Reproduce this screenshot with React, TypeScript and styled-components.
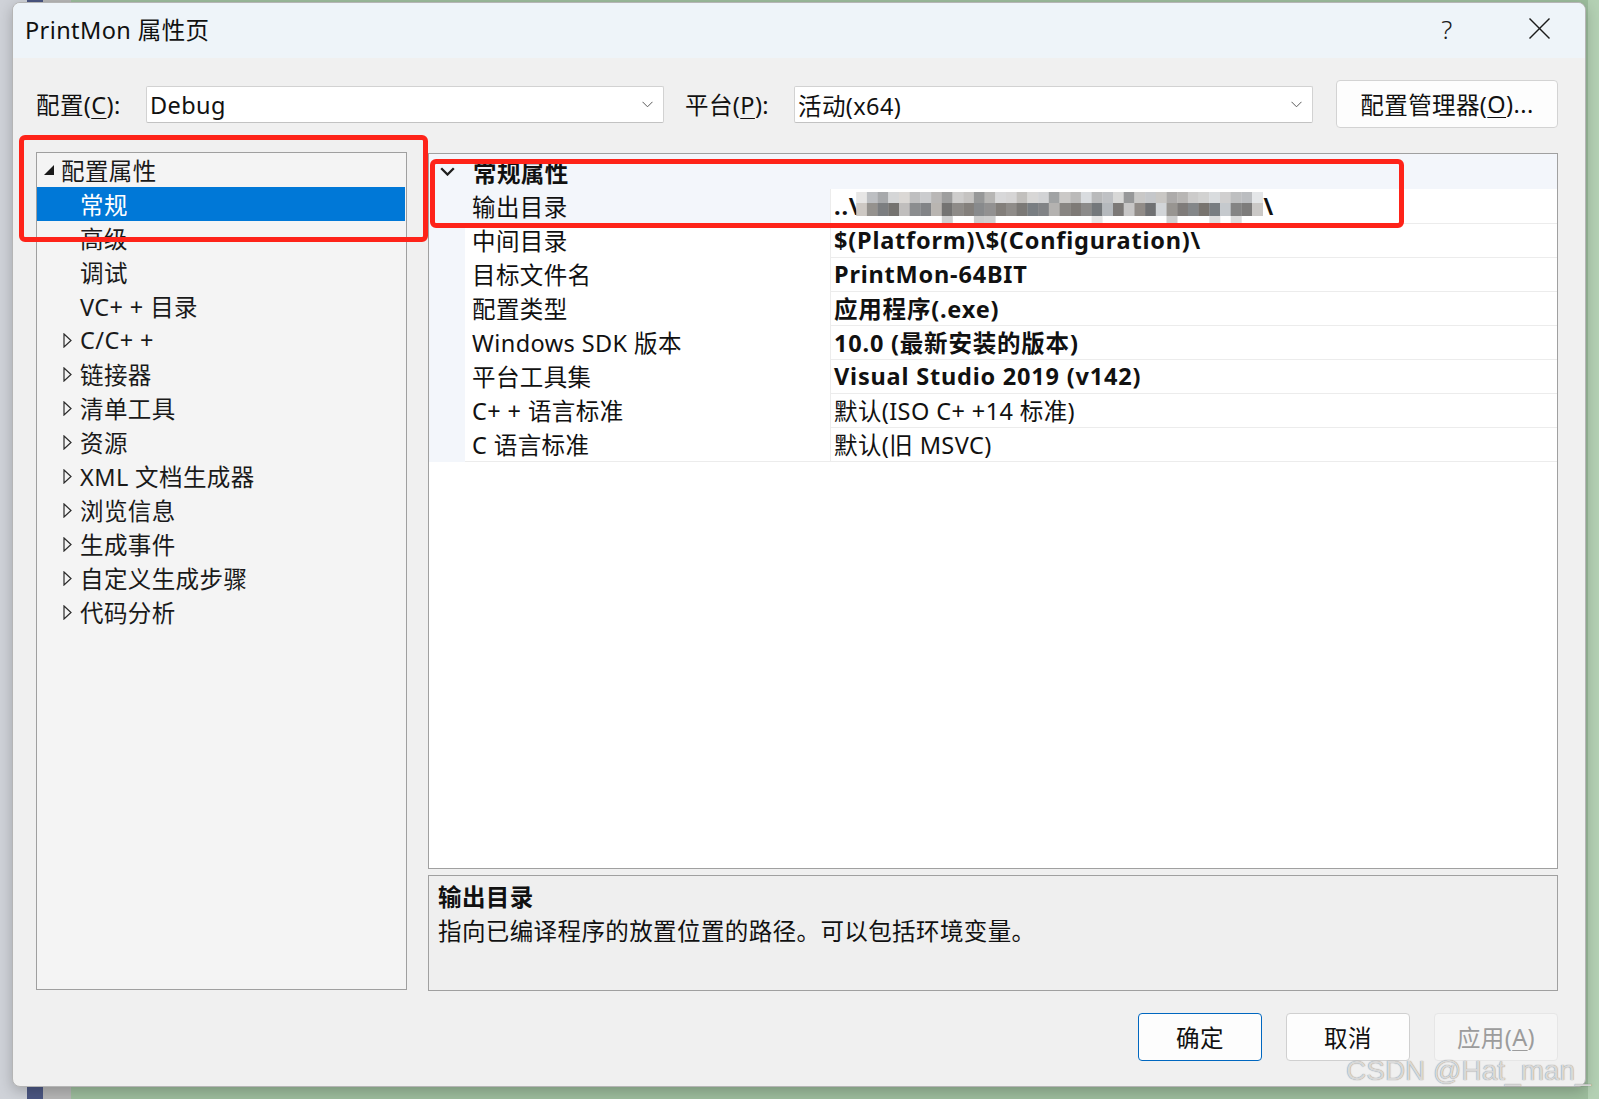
import React from 'react';
import styled, { createGlobalStyle } from 'styled-components';

const GlobalStyle = createGlobalStyle`
  html, body { margin: 0; padding: 0; }
  body {
    width: 1599px;
    height: 1099px;
    overflow: hidden;
    font-family: "Noto Sans", "Noto Sans CJK SC", sans-serif;
    letter-spacing: 0.4px;
    color: #000;
  }
  * { box-sizing: border-box; }
`;

/* ---------- desktop behind the dialog ---------- */
const Backdrop = styled.div`
  position: relative;
  width: 1599px;
  height: 1099px;
  padding: 2px 13px 12px 12px;
  background: linear-gradient(
    to right,
    #cfd2d8 0 27px,
    #4b5682 27px 43px,
    #b7b7b7 43px 71px,
    #9dbd9d 71px 1588px,
    #b3d0b3 1588px
  );
`;

const Dialog = styled.div`
  width: 1574px;
  height: 1085px;
  display: flex;
  flex-direction: column;
  background: #f0f0f0;
  border: 1px solid #b5b5b5;
  border-radius: 8px;
  box-shadow: 0 4px 14px rgba(0, 0, 0, 0.22);
  overflow: hidden;
`;

/* ---------- title bar ---------- */
const TitleBar = styled.div`
  flex: none;
  height: 55px;
  display: flex;
  align-items: center;
  padding-left: 12px;
  background: #eef4f9;
`;

const TitleText = styled.div`
  flex: 1;
  margin-top: -4px;
  font-size: 23.5px;
  color: #111;
`;

const CaptionButton = styled.div`
  width: 92px;
  height: 55px;
  display: flex;
  align-items: center;
  justify-content: center;
  padding-bottom: 4px;
  font-size: 26px;
  font-weight: 300;
  color: #1b1b1b;
`;

/* ---------- body ---------- */
const Body = styled.div`
  flex: 1;
  display: flex;
  flex-direction: column;
  padding: 0 27px 0 23px;
`;

const TopRow = styled.div`
  display: flex;
  align-items: center;
  height: 48px;
  margin-top: 22px;
`;

const FieldLabel = styled.div<{ $w: number; $ml?: number }>`
  width: ${(p) => p.$w}px;
  margin-left: ${(p) => p.$ml ?? 0}px;
  font-size: 23.5px;
  color: #111;
  white-space: nowrap;
  u { text-underline-offset: 4px; text-decoration-thickness: 1px; }
`;

const Combo = styled.div<{ $w: number }>`
  width: ${(p) => p.$w}px;
  height: 37px;
  display: flex;
  align-items: center;
  justify-content: space-between;
  padding: 1px 10px 0 3px;
  background: #fff;
  border: 1px solid #d2d2d2;
  border-bottom-color: #c2c2c2;
  border-radius: 2px;
  font-size: 23.5px;
  color: #111;
`;

const ManagerButton = styled.div`
  width: 222px;
  height: 48px;
  margin-left: 23px;
  display: flex;
  align-items: center;
  justify-content: center;
  background: #fdfdfd;
  border: 1px solid #d3d3d3;
  border-radius: 4px;
  font-size: 23.5px;
  color: #111;
  u { text-underline-offset: 4px; text-decoration-thickness: 1px; }
`;

const Main = styled.div`
  margin-top: 24px;
  height: 839px;
  display: grid;
  grid-template-columns: 371px 1fr;
  column-gap: 21px;
`;

/* ---------- tree ---------- */
const TreePanel = styled.div`
  height: 838px;
  background: #f4f4f4;
  border: 1px solid #9f9f9f;
  padding-right: 1px;
  overflow: hidden;
`;

const TreeRow = styled.div<{ $level: number; $selected?: boolean }>`
  height: 34px;
  display: flex;
  align-items: center;
  padding-left: ${(p) => 4 + p.$level * 19}px;
  background: ${(p) => (p.$selected ? '#0078d7' : 'transparent')};
  color: ${(p) => (p.$selected ? '#fff' : '#1a1a1a')};
  font-size: 23.5px;
  white-space: nowrap;
`;

const Expander = styled.span`
  flex: none;
  width: 19px;
  margin-right: 1px;
  padding-left: 3px;
  display: flex;
  align-items: center;
`;

/* ---------- property grid ---------- */
const RightColumn = styled.div`
  display: flex;
  flex-direction: column;
  gap: 6px;
`;

const PropGrid = styled.div`
  flex: 1;
  margin-top: 1px;
  display: flex;
  flex-direction: column;
  background: #fff;
  border: 1px solid #a0a0a0;
`;

const GroupHeader = styled.div`
  height: 35px;
  display: grid;
  grid-template-columns: 36px 1fr;
  align-items: center;
  background: #f3f6fb;
  font-size: 23.5px;
  font-weight: 700;
  color: #111;
`;

const GutterIcon = styled.div`
  display: flex;
  justify-content: center;
  align-items: center;
`;

const HeaderLabel = styled.div`
  padding-left: 8px;
`;

const PropRow = styled.div`
  height: 34px;
  display: grid;
  grid-template-columns: 36px 366px 1fr;
  font-size: 23.5px;
  color: #111;
`;

const Gutter = styled.div`
  background: #f3f6fb;
`;

const NameCell = styled.div<{ $selected?: boolean }>`
  display: flex;
  align-items: center;
  padding-left: 7px;
  background: ${(p) => (p.$selected ? '#f3f6fb' : '#fff')};
  border-bottom: 1px solid #ececec;
  border-right: 1px solid #ececec;
  white-space: nowrap;
`;

const ValueCell = styled.div<{ $bold?: boolean }>`
  display: flex;
  align-items: center;
  padding-left: 3px;
  font-weight: ${(p) => (p.$bold ? 700 : 400)};
  letter-spacing: ${(p) => (p.$bold ? '0.8px' : '0.4px')};
  border-bottom: 1px solid #ececec;
  white-space: nowrap;
  overflow: hidden;
`;

const MosaicSvg = styled.svg`
  flex: none;
  align-self: flex-start;
  margin-top: 3px;
  margin-left: -3px;
`;

/* ---------- description ---------- */
const DescPanel = styled.div`
  height: 116px;
  background: #efefef;
  border: 1px solid #a0a0a0;
  padding: 4px 9px;
  font-size: 23.5px;
  line-height: 34px;
  color: #111;
`;

const DescTitle = styled.div`
  font-weight: 700;
`;

/* ---------- footer ---------- */
const Footer = styled.div`
  margin-top: 22px;
  height: 48px;
  display: flex;
  justify-content: flex-end;
  gap: 24px;
`;

const DialogButton = styled.div<{ $variant: 'primary' | 'normal' | 'disabled' }>`
  width: 124px;
  height: 48px;
  display: flex;
  align-items: center;
  justify-content: center;
  border-radius: 4px;
  font-size: 23.5px;
  background: ${(p) => (p.$variant === 'disabled' ? '#f5f5f5' : '#fdfdfd')};
  border: 1px solid
    ${(p) =>
      p.$variant === 'primary' ? '#0067c0' : p.$variant === 'disabled' ? '#e6e6e6' : '#d0d0d0'};
  color: ${(p) => (p.$variant === 'disabled' ? '#9c9c9c' : '#111')};
  u { text-underline-offset: 4px; text-decoration-thickness: 1px; }
`;

/* ---------- overlays ---------- */
const Annotation = styled.div<{ $x: number; $y: number; $w: number; $h: number }>`
  position: absolute;
  left: ${(p) => p.$x}px;
  top: ${(p) => p.$y}px;
  width: ${(p) => p.$w}px;
  height: ${(p) => p.$h}px;
  border: 5px solid #fe2319;
  border-radius: 6px;
  pointer-events: none;
`;

const Watermark = styled.div`
  position: absolute;
  left: 1346px;
  top: 1057px;
  font-family: "Liberation Sans", Arial, sans-serif;
  font-size: 28px;
  line-height: 28px;
  letter-spacing: 0;
  color: rgba(236, 236, 236, 0.85);
  text-shadow: 0 0 1px rgba(70, 70, 70, 0.8);
  white-space: nowrap;
  pointer-events: none;
`;

/* ---------- drawings ---------- */
const ComboChevron = () => (
  <svg width="11" height="7" viewBox="0 0 11 7">
    <polyline points="0.5,0.8 5.5,5.8 10.5,0.8" fill="none" stroke="#5a5a5a" strokeWidth="1" />
  </svg>
);

const OpenTriangle = () => (
  <svg width="10" height="10" viewBox="0 0 10 10">
    <polygon points="10,0 10,10 0,10" fill="#1a1a1a" />
  </svg>
);

const ClosedTriangle = () => (
  <svg width="9" height="15" viewBox="0 0 9 15">
    <polygon points="1,1 8,7.5 1,14" fill="none" stroke="#2a2a2a" strokeWidth="1.2" />
  </svg>
);

const HeaderChevron = () => (
  <svg width="15" height="9" viewBox="0 0 15 9">
    <polyline points="1.2,1.2 7.5,7.5 13.8,1.2" fill="none" stroke="#1e1e1e" strokeWidth="2.3" />
  </svg>
);

const CloseGlyph = () => (
  <svg width="21" height="21" viewBox="0 0 21 21">
    <line x1="0.5" y1="0.5" x2="20.5" y2="20.5" stroke="#1b1b1b" strokeWidth="1.4" />
    <line x1="20.5" y1="0.5" x2="0.5" y2="20.5" stroke="#1b1b1b" strokeWidth="1.4" />
  </svg>
);

/* pixelated (blurred) path */
let seed = 11;
const rnd = () => {
  seed = (seed * 9301 + 49297) % 233280;
  return seed / 233280;
};
const COLS = 38;
const BW = 10.7;
const gray = (v: number, tint = 0) =>
  `rgb(${Math.round(v + tint)},${Math.round(v)},${Math.round(v - tint)})`;
const mosaicRows = [
  {
    y: 0,
    h: 11,
    cells: Array.from({ length: COLS }, (_, i) => {
      const edge = i === 0 || i === COLS - 1;
      const v = edge ? 230 : rnd() < 0.25 ? 150 + rnd() * 25 : 178 + rnd() * 45;
      return gray(v, rnd() * 6 - 3);
    }),
  },
  {
    y: 11,
    h: 13,
    cells: Array.from({ length: COLS }, (_, i) => {
      const edge = i === 0 || i === COLS - 1;
      const v = edge ? 200 : rnd() < 0.12 ? 175 + rnd() * 40 : 112 + rnd() * 40;
      return gray(v, rnd() * 10 - 5);
    }),
  },
  {
    y: 24,
    h: 7,
    cells: Array.from({ length: COLS }, () =>
      rnd() < 0.22 ? gray(200 + rnd() * 30) : 'none'
    ),
  },
];

const Mosaic = () => (
  <MosaicSvg width={Math.round(COLS * BW)} height={31} viewBox={`0 0 ${COLS * BW} 31`}>
    {mosaicRows.map((row, r) =>
      row.cells.map((c, i) =>
        c === 'none' ? null : (
          <rect key={`${r}-${i}`} x={i * BW} y={row.y} width={BW + 0.3} height={row.h} fill={c} />
        )
      )
    )}
  </MosaicSvg>
);

/* ---------- data ---------- */
type TreeItem = { label: string; level: number; state?: 'open' | 'closed'; selected?: boolean };
const treeItems: TreeItem[] = [
  { label: '配置属性', level: 0, state: 'open' },
  { label: '常规', level: 1, selected: true },
  { label: '高级', level: 1 },
  { label: '调试', level: 1 },
  { label: 'VC+ + 目录', level: 1 },
  { label: 'C/C+ +', level: 1, state: 'closed' },
  { label: '链接器', level: 1, state: 'closed' },
  { label: '清单工具', level: 1, state: 'closed' },
  { label: '资源', level: 1, state: 'closed' },
  { label: 'XML 文档生成器', level: 1, state: 'closed' },
  { label: '浏览信息', level: 1, state: 'closed' },
  { label: '生成事件', level: 1, state: 'closed' },
  { label: '自定义生成步骤', level: 1, state: 'closed' },
  { label: '代码分析', level: 1, state: 'closed' },
];

type Prop = { name: string; value: string; bold: boolean };
const props: Prop[] = [
  { name: '中间目录', value: '$(Platform)\\$(Configuration)\\', bold: true },
  { name: '目标文件名', value: 'PrintMon-64BIT', bold: true },
  { name: '配置类型', value: '应用程序(.exe)', bold: true },
  { name: 'Windows SDK 版本', value: '10.0 (最新安装的版本)', bold: true },
  { name: '平台工具集', value: 'Visual Studio 2019 (v142)', bold: true },
  { name: 'C+ + 语言标准', value: '默认(ISO C+ +14 标准)', bold: false },
  { name: 'C 语言标准', value: '默认(旧 MSVC)', bold: false },
];

export default function App() {
  return (
    <>
      <GlobalStyle />
      <Backdrop>
        <Dialog>
          <TitleBar>
            <TitleText>PrintMon 属性页</TitleText>
            <CaptionButton>?</CaptionButton>
            <CaptionButton>
              <CloseGlyph />
            </CaptionButton>
          </TitleBar>

          <Body>
            <TopRow>
              <FieldLabel $w={110}>
                配置(<u>C</u>):
              </FieldLabel>
              <Combo $w={518}>
                <span>Debug</span>
                <ComboChevron />
              </Combo>
              <FieldLabel $w={109} $ml={21}>
                平台(<u>P</u>):
              </FieldLabel>
              <Combo $w={519}>
                <span>活动(x64)</span>
                <ComboChevron />
              </Combo>
              <ManagerButton>
                配置管理器(<u>O</u>)...
              </ManagerButton>
            </TopRow>

            <Main>
              <TreePanel>
                {treeItems.map((t) => (
                  <TreeRow key={t.label} $level={t.level} $selected={t.selected}>
                    <Expander>
                      {t.state === 'open' && <OpenTriangle />}
                      {t.state === 'closed' && <ClosedTriangle />}
                    </Expander>
                    {t.label}
                  </TreeRow>
                ))}
              </TreePanel>

              <RightColumn>
                <PropGrid>
                  <GroupHeader>
                    <GutterIcon>
                      <HeaderChevron />
                    </GutterIcon>
                    <HeaderLabel>常规属性</HeaderLabel>
                  </GroupHeader>
                  <PropRow>
                    <Gutter />
                    <NameCell $selected>输出目录</NameCell>
                    <ValueCell $bold>
                      <span>..\</span>
                      <Mosaic />
                      <span>\</span>
                    </ValueCell>
                  </PropRow>
                  {props.map((p) => (
                    <PropRow key={p.name}>
                      <Gutter />
                      <NameCell>{p.name}</NameCell>
                      <ValueCell $bold={p.bold}>{p.value}</ValueCell>
                    </PropRow>
                  ))}
                </PropGrid>

                <DescPanel>
                  <DescTitle>输出目录</DescTitle>
                  <div>指向已编译程序的放置位置的路径。可以包括环境变量。</div>
                </DescPanel>
              </RightColumn>
            </Main>

            <Footer>
              <DialogButton $variant="primary">确定</DialogButton>
              <DialogButton $variant="normal">取消</DialogButton>
              <DialogButton $variant="disabled">
                应用(<u>A</u>)
              </DialogButton>
            </Footer>
          </Body>
        </Dialog>

        <Annotation $x={19} $y={135} $w={409} $h={107} />
        <Annotation $x={430} $y={159} $w={974} $h={69} />
        <Watermark>CSDN @Hat_man_</Watermark>
      </Backdrop>
    </>
  );
}
